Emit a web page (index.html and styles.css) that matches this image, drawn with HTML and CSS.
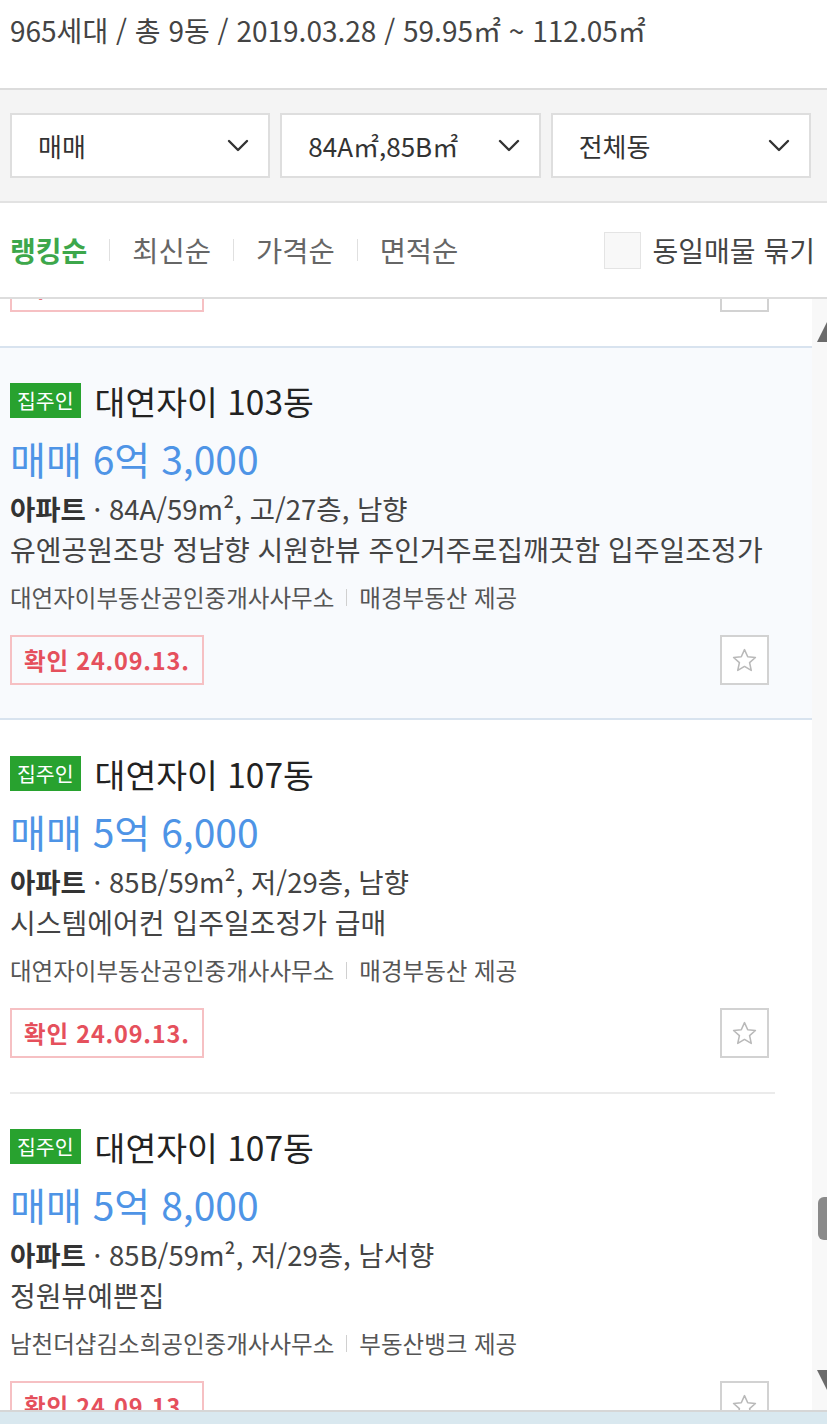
FILE: index.html
```html
<!DOCTYPE html>
<html lang="ko">
<head>
<meta charset="utf-8">
<title>매물 목록</title>
<link rel="stylesheet" href="styles.css">
</head>
<body>
<div class="summary">965세대 / 총 9동 / 2019.03.28 / 59.95㎡ ~ 112.05㎡</div>

<div class="filters">
  <div class="select"><span>매매</span><svg class="chev" viewBox="0 0 22 13"><polyline points="2,2 11,11 20,2"/></svg></div>
  <div class="select"><span>84A㎡,85B㎡</span><svg class="chev" viewBox="0 0 22 13"><polyline points="2,2 11,11 20,2"/></svg></div>
  <div class="select"><span>전체동</span><svg class="chev" viewBox="0 0 22 13"><polyline points="2,2 11,11 20,2"/></svg></div>
</div>

<div class="sort">
  <div class="tabs">
    <span class="tab on">랭킹순</span><span class="sep"></span>
    <span class="tab">최신순</span><span class="sep"></span>
    <span class="tab">가격순</span><span class="sep"></span>
    <span class="tab">면적순</span>
  </div>
  <label class="group"><span class="check"></span>동일매물 묶기</label>
</div>

<div class="list-wrap">
  <div class="list">
    <article class="card first">
      <div class="card-body">
        <div class="title-row"><span class="badge">집주인</span><span class="title">대연자이 105동</span></div>
        <div class="price">매매 6억 2,000</div>
        <div class="info"><b>아파트</b> · 84A/59m², 중/27층, 남향</div>
        <div class="desc">올수리 입주협의</div>
        <div class="agent">대연자이부동산공인중개사사무소<span class="bar"></span>매경부동산 제공</div>
        <div class="bottom-row"><span class="confirm">확인 24.09.13.</span><span class="fav"><svg viewBox="0 0 26 26"><polygon points="13,2.5 16.1,9.4 23.5,10.1 17.9,15.1 19.5,22.5 13,18.7 6.5,22.5 8.1,15.1 2.5,10.1 9.9,9.4"/></svg></span></div>
      </div>
    </article>

    <article class="card active">
      <div class="card-body">
        <div class="title-row"><span class="badge">집주인</span><span class="title">대연자이 103동</span></div>
        <div class="price">매매 6억 3,000</div>
        <div class="info"><b>아파트</b> · 84A/59m², 고/27층, 남향</div>
        <div class="desc">유엔공원조망 정남향 시원한뷰 주인거주로집깨끗함 입주일조정가</div>
        <div class="agent">대연자이부동산공인중개사사무소<span class="bar"></span>매경부동산 제공</div>
        <div class="bottom-row"><span class="confirm">확인 24.09.13.</span><span class="fav"><svg viewBox="0 0 26 26"><polygon points="13,2.5 16.1,9.4 23.5,10.1 17.9,15.1 19.5,22.5 13,18.7 6.5,22.5 8.1,15.1 2.5,10.1 9.9,9.4"/></svg></span></div>
      </div>
    </article>

    <article class="card">
      <div class="card-body">
        <div class="title-row"><span class="badge">집주인</span><span class="title">대연자이 107동</span></div>
        <div class="price">매매 5억 6,000</div>
        <div class="info"><b>아파트</b> · 85B/59m², 저/29층, 남향</div>
        <div class="desc">시스템에어컨 입주일조정가 급매</div>
        <div class="agent">대연자이부동산공인중개사사무소<span class="bar"></span>매경부동산 제공</div>
        <div class="bottom-row"><span class="confirm">확인 24.09.13.</span><span class="fav"><svg viewBox="0 0 26 26"><polygon points="13,2.5 16.1,9.4 23.5,10.1 17.9,15.1 19.5,22.5 13,18.7 6.5,22.5 8.1,15.1 2.5,10.1 9.9,9.4"/></svg></span></div>
      </div>
    </article>

    <article class="card">
      <div class="card-body">
        <div class="title-row"><span class="badge">집주인</span><span class="title">대연자이 107동</span></div>
        <div class="price">매매 5억 8,000</div>
        <div class="info"><b>아파트</b> · 85B/59m², 저/29층, 남서향</div>
        <div class="desc">정원뷰예쁜집</div>
        <div class="agent">남천더샵김소희공인중개사사무소<span class="bar"></span>부동산뱅크 제공</div>
        <div class="bottom-row"><span class="confirm">확인 24.09.13.</span><span class="fav"><svg viewBox="0 0 26 26"><polygon points="13,2.5 16.1,9.4 23.5,10.1 17.9,15.1 19.5,22.5 13,18.7 6.5,22.5 8.1,15.1 2.5,10.1 9.9,9.4"/></svg></span></div>
      </div>
    </article>
  </div>

  <div class="scrollbar">
    <svg viewBox="0 0 15 1111" width="15" height="1111">
      <polygon class="arrow" points="5,43 15,23 25,43"/>
      <rect class="thumb" x="6" y="898" width="20" height="43" rx="6"/>
      <polygon class="arrow" points="5,1071 25,1071 15,1091"/>
    </svg>
  </div>
</div>

<div class="footer-line"></div>
<div class="footer-strip"></div>
</body>
</html>
```

FILE: styles.css
```css
* { box-sizing: border-box; }

html, body {
  margin: 0;
  padding: 0;
  background: #fff;
}

body {
  width: 827px;
  height: 1425px;
  overflow: hidden;
  font-family: "Noto Sans CJK KR", "Noto Sans", sans-serif;
  color: #333;
}

/* summary */
.summary {
  height: 90px;
  padding: 8px 0 0 10px;
  font-size: 28px;
  line-height: 44px;
  color: #444;
  white-space: nowrap;
  border-bottom: 2px solid #dcdcdc;
}

/* filters */
.filters {
  background: #f4f4f4;
  padding: 23px 16px 23px 10px;
  display: grid;
  grid-template-columns: 1fr 1fr 1fr;
  column-gap: 10px;
  border-bottom: 2px solid #e2e2e2;
}

.select {
  height: 65px;
  background: #fff;
  border: 2px solid #dedede;
  display: flex;
  align-items: center;
  justify-content: space-between;
  padding: 0 19px 0 26px;
  font-size: 26px;
  line-height: 40px;
  color: #333;
  white-space: nowrap;
}

.chev {
  width: 22px;
  height: 13px;
  flex: none;
  fill: none;
  stroke: #333;
  stroke-width: 2.4;
  stroke-linecap: round;
  stroke-linejoin: round;
}

/* sort */
.sort {
  height: 96px;
  display: flex;
  align-items: center;
  justify-content: space-between;
  padding: 0 12px 0 10px;
  border-bottom: 2px solid #dddddd;
}

.tabs {
  display: flex;
  align-items: center;
}

.tab {
  font-size: 28.5px;
  line-height: 42px;
  color: #666;
  white-space: nowrap;
}

.tab.on {
  color: #3da74b;
  font-weight: 700;
  font-size: 28px;
}

.sep {
  width: 1px;
  height: 22px;
  background: #e0e0e0;
  margin: 0 22px;
}

.group {
  display: flex;
  align-items: center;
  font-size: 28px;
  line-height: 42px;
  color: #444;
  white-space: nowrap;
}

.check {
  width: 37px;
  height: 37px;
  border: 1px solid #e4e4e4;
  background: #f8f8f8;
  margin-right: 12px;
}

/* list */
.list-wrap {
  height: 1111px;
  display: flex;
  overflow: hidden;
}

.list {
  width: 812px;
  overflow: hidden;
}

.card {
  padding: 0 37px 0 10px;
}

.card.first {
  margin-top: -326px;
}

.card-body {
  border-top: 2px solid #ebebeb;
  padding: 35px 6px 34px 0;
}

.card.active {
  background: #f8fafd;
  border-top: 2px solid #d8e3ef;
  border-bottom: 2px solid #d8e3ef;
}

.card.active .card-body {
  border-top: 0;
  padding-top: 35px;
  padding-bottom: 33px;
}

.card.active + .card .card-body {
  border-top: 0;
  padding-top: 36px;
}

.title-row {
  height: 35px;
  display: flex;
  align-items: center;
}

.badge {
  height: 35px;
  padding: 0 7px;
  background: #28a22f;
  color: #fff;
  font-size: 20.5px;
  line-height: 35px;
  margin-right: 14px;
  white-space: nowrap;
}

.title {
  font-size: 33.5px;
  line-height: 40px;
  color: #222;
  white-space: nowrap;
}

.price {
  margin-top: 18px;
  font-size: 39px;
  line-height: 44px;
  color: #4e94e6;
  white-space: nowrap;
}

.info {
  margin-top: 8px;
  font-size: 27.5px;
  line-height: 41px;
  color: #444;
  white-space: nowrap;
}

.info b {
  color: #333;
  font-weight: 700;
}

.desc {
  font-size: 28px;
  line-height: 41px;
  color: #444;
  white-space: nowrap;
}

.agent {
  margin-top: 12px;
  font-size: 23.5px;
  line-height: 30px;
  color: #555;
  display: flex;
  align-items: center;
  white-space: nowrap;
}

.bar {
  width: 1px;
  height: 17px;
  background: #d0d0d0;
  margin: 0 12px;
}

.bottom-row {
  margin-top: 23px;
  height: 50px;
  display: flex;
  justify-content: space-between;
  align-items: stretch;
}

.confirm {
  display: flex;
  align-items: center;
  padding: 0 12px;
  border: 2px solid #f6c0c3;
  color: #e5505c;
  font-size: 23.5px;
  font-weight: 700;
  letter-spacing: 0.8px;
  white-space: nowrap;
}

.fav {
  width: 49px;
  border: 2px solid #d2d2d2;
  display: flex;
  align-items: center;
  justify-content: center;
  background: #fff;
}

.fav svg {
  width: 27px;
  height: 27px;
  fill: none;
  stroke: #b9b9b9;
  stroke-width: 1.5;
  stroke-linejoin: round;
}

/* scrollbar */
.scrollbar {
  width: 15px;
  background: #f8f8f8;
  overflow: hidden;
}

.scrollbar svg {
  display: block;
}

.arrow {
  fill: #6b6b6b;
}

.thumb {
  fill: #8a8a8a;
}

.footer-line {
  height: 2px;
  background: #d6d6d6;
}

.footer-strip {
  height: 12px;
  background: #d9e8ef;
}
```
